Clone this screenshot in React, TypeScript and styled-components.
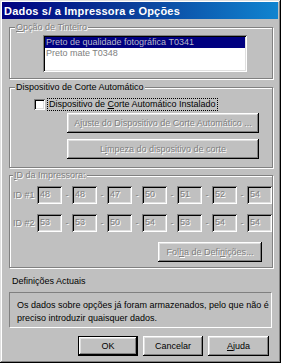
import styled, { createGlobalStyle, css } from 'styled-components';

const GlobalStyle = createGlobalStyle`
  html, body {
    margin: 0;
    padding: 0;
    background: #c0c0c0;
  }
  body {
    font-family: "Liberation Sans", Arial, sans-serif;
    font-size: 9px;
    color: #000;
  }
`;

const raised = css`
  box-shadow:
    inset -1px -1px #000,
    inset 1px 1px #fff,
    inset -2px -2px #808080,
    inset 2px 2px #dfdfdf;
`;

const sunken = css`
  box-shadow:
    inset 1px 1px #808080,
    inset -1px -1px #fff,
    inset 2px 2px #000,
    inset -2px -2px #dfdfdf;
`;

const disabledText = css`
  color: #808080;
  text-shadow: 1px 1px 0 #fff;
`;

const idRows = [
  { label: 'ID #1', values: ['48', '48', '47', '50', '51', '52', '54'] },
  { label: 'ID #2', values: ['53', '53', '50', '54', '53', '54', '54'] },
];

function Accel({ text, at }: { text: string; at: number }) {
  return (
    <>
      {text.slice(0, at)}
      <u>{text[at]}</u>
      {text.slice(at + 1)}
    </>
  );
}

export default function App() {
  return (
    <>
      <GlobalStyle />
      <S.Window>
        <S.TitleBar>Dados s/ a Impressora e Opções</S.TitleBar>
        <S.Body>
          <S.Group $top={3} $padBottom={6}>
            <S.Legend $disabled>
              <Accel text="Opção de Tinteiro" at={0} />
            </S.Legend>
            <S.GroupContent $padLeft={33}>
              <S.ListBox>
                <S.ListItem $selected>Preto de qualidade fotográfica T0341</S.ListItem>
                <S.ListItem>Preto mate T0348</S.ListItem>
              </S.ListBox>
            </S.GroupContent>
          </S.Group>

          <S.Group $top={3} $padBottom={8}>
            <S.Legend>Dispositivo de Corte Automático</S.Legend>
            <S.GroupContent $padLeft={24}>
              <S.CheckRow>
                <S.CheckBox />
                <S.CheckLabel>
                  Dispositivo de <Accel text="Corte" at={0} /> Automático Instalado
                </S.CheckLabel>
              </S.CheckRow>
              <S.ButtonStack>
                <S.Button $width={192} disabled>
                  A<u>j</u>uste do Dispositivo de Corte Automático ...
                </S.Button>
                <S.Button $width={192} disabled>
                  L<u>i</u>mpeza do dispositivo de corte
                </S.Button>
              </S.ButtonStack>
            </S.GroupContent>
          </S.Group>

          <S.Group $top={2} $padBottom={5}>
            <S.Legend $disabled $shift={-2}>
              <Accel text="ID da Impressora:" at={0} />
            </S.Legend>
            <S.GroupContent $padLeft={2}>
              <S.IdGrid>
                {idRows.map((row) => (
                  <S.IdRow key={row.label}>
                    <S.IdLabel>{row.label}</S.IdLabel>
                    {row.values.map((v, i) => (
                      <S.IdCell key={i}>
                        {i > 0 && <S.Dash>-</S.Dash>}
                        <S.IdBox>{v}</S.IdBox>
                      </S.IdCell>
                    ))}
                  </S.IdRow>
                ))}
              </S.IdGrid>
              <S.RightRow>
                <S.Button $width={104} disabled>
                  Fol<u>h</u>a de Defi<u>n</u>ições...
                </S.Button>
              </S.RightRow>
            </S.GroupContent>
          </S.Group>

          <S.SectionLabel>Definições Actuais</S.SectionLabel>
          <S.InfoBox>
            Os dados sobre opções já foram armazenados, pelo que não é
            <br />
            preciso introduzir quaisquer dados.
          </S.InfoBox>

          <S.Footer>
            <S.Button $width={60} $default>
              OK
            </S.Button>
            <S.Button $width={60}>Cancelar</S.Button>
            <S.Button $width={61}>
              <u>A</u>juda
            </S.Button>
          </S.Footer>
        </S.Body>
      </S.Window>
    </>
  );
}

const S = {
  Window: styled.div`
    width: 281px;
    height: 363px;
    box-sizing: border-box;
    padding: 2px 3px 3px 2px;
    background: #c0c0c0;
    box-shadow:
      inset -1px -1px #000,
      inset 1px 1px #dfdfdf,
      inset -2px -2px #808080,
      inset 2px 2px #fff;
    display: flex;
    flex-direction: column;
  `,
  TitleBar: styled.div`
    height: 17px;
    flex: none;
    display: flex;
    align-items: center;
    padding-left: 2px;
    background: linear-gradient(90deg, #000080 0%, #0a3c98 45%, #1084d0 100%);
    color: #fff;
    font-weight: bold;
    font-size: 11px;
    letter-spacing: 0.2px;
  `,
  Body: styled.div`
    display: flex;
    flex-direction: column;
    padding: 0 5px 0 7px;
  `,
  Group: styled.fieldset<{ $top: number; $padBottom: number }>`
    margin: ${({ $top }) => $top}px 0 0 0;
    padding: 2px 0 ${({ $padBottom }) => $padBottom}px 0;
    border: 1px solid #808080;
    box-shadow:
      inset 1px 1px #fff,
      1px 1px #fff;
    min-inline-size: 0;
  `,
  GroupContent: styled.div<{ $padLeft: number }>`
    padding-left: ${({ $padLeft }) => $padLeft}px;
  `,
  Legend: styled.legend<{ $disabled?: boolean; $shift?: number }>`
    margin-left: ${({ $shift = 0 }) => 5 + $shift}px;
    padding: 0 1px;
    line-height: 11px;
    background: #c0c0c0;
    ${({ $disabled }) => $disabled && disabledText}
  `,
  ListBox: styled.div`
    width: 204px;
    height: 37px;
    box-sizing: border-box;
    padding: 2px;
    background: #fff;
    ${sunken}
  `,
  ListItem: styled.div<{ $selected?: boolean }>`
    height: 11px;
    line-height: 11px;
    padding-left: 1px;
    color: ${({ $selected }) => ($selected ? '#b8b8c8' : '#808080')};
    background: ${({ $selected }) => ($selected ? '#000080' : 'transparent')};
  `,
  CheckRow: styled.div`
    display: flex;
    align-items: center;
    gap: 3px;
    margin-top: 3px;
    height: 13px;
  `,
  CheckBox: styled.span`
    width: 11px;
    height: 11px;
    box-sizing: border-box;
    background: #fff;
    ${sunken}
  `,
  CheckLabel: styled.span`
    padding: 0 1px;
    line-height: 11px;
    outline: 1px dotted #000;
  `,
  ButtonStack: styled.div`
    display: flex;
    flex-direction: column;
    gap: 6px;
    margin: 2px 0 0 33px;
  `,
  Button: styled.button<{ $width: number; $default?: boolean }>`
    width: ${({ $width }) => $width}px;
    height: 20px;
    box-sizing: border-box;
    border: ${({ $default }) => ($default ? '1px solid #000' : 'none')};
    padding: 0;
    background: #c0c0c0;
    font-family: "Liberation Sans", Arial, sans-serif;
    font-size: 9px;
    color: #000;
    ${raised}
    &:disabled {
      ${disabledText}
    }
  `,
  IdGrid: styled.div`
    display: flex;
    flex-direction: column;
    gap: 10px;
    margin-top: 3px;
  `,
  IdRow: styled.div`
    display: flex;
    align-items: center;
    ${disabledText}
  `,
  IdLabel: styled.span`
    width: 24px;
    padding-left: 1px;
  `,
  IdCell: styled.span`
    display: flex;
    align-items: center;
  `,
  Dash: styled.span`
    width: 10px;
    text-align: center;
  `,
  IdBox: styled.span`
    width: 25px;
    height: 18px;
    box-sizing: border-box;
    padding: 3px 0 0 3px;
    line-height: 11px;
    ${sunken}
  `,
  RightRow: styled.div`
    display: flex;
    justify-content: flex-end;
    margin: 10px 10px 0 0;
  `,
  SectionLabel: styled.div`
    margin: 8px 0 0 3px;
    line-height: 11px;
  `,
  InfoBox: styled.div`
    margin: 5px 1px 0 0;
    height: 36px;
    box-sizing: border-box;
    padding: 6px 0 0 7px;
    line-height: 13px;
    border: 1px solid;
    border-color: #808080 #fff #fff #808080;
  `,
  Footer: styled.div`
    display: flex;
    justify-content: flex-end;
    gap: 5px;
    margin: 8px 4px 0 0;
  `,
};
